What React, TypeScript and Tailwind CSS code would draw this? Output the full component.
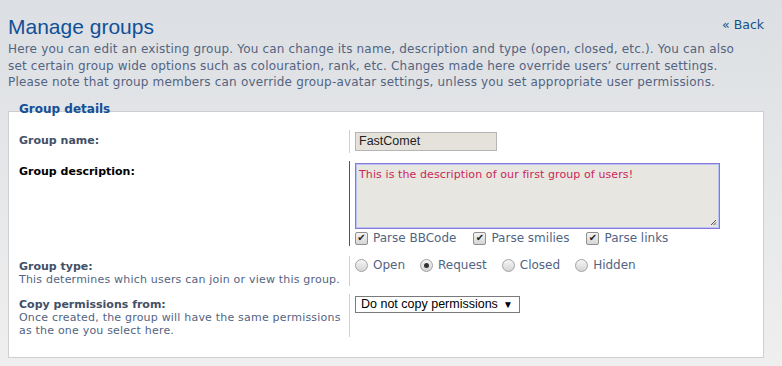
import React from 'react'

const verdana = { fontFamily: '"DejaVu Sans", Verdana, sans-serif' }
const tahoma = { fontFamily: '"Liberation Sans", Tahoma, sans-serif' }

function CheckBox({ label }: { label: string }) {
  return (
    <span className="flex items-center">
      <span className="flex h-[13px] w-[13px] items-center justify-center rounded-[2px] border border-[#8f8f8f] bg-gradient-to-b from-[#f4f4f4] to-[#d6d6d6] text-[10px] leading-none text-[#222]">
        ✔
      </span>
      <span className="ml-[5px] text-[#536482]">{label}</span>
    </span>
  )
}

function Radio({ label, checked }: { label: string; checked?: boolean }) {
  return (
    <span className="flex items-center">
      <span className="flex h-[13px] w-[13px] items-center justify-center rounded-full border border-[#a2a2a2] bg-gradient-to-b from-[#f6f6f6] to-[#d4d4d4]">
        {checked && <span className="h-[5px] w-[5px] rounded-full bg-[#333]" />}
      </span>
      <span className="ml-[5px] text-[#536482]">{label}</span>
    </span>
  )
}

function Row({
  label,
  desc,
  active,
  className = '',
  children,
}: {
  label: string
  desc?: string[]
  active?: boolean
  className?: string
  children: React.ReactNode
}) {
  return (
    <div className={`flex ${className}`}>
      <div className="w-[330px] shrink-0 pt-[4px]">
        <div className={`font-bold ${active ? 'text-black' : 'text-[#425067]'}`}>{label}</div>
        {desc?.map(d => (
          <div key={d} className="tracking-[0.2px] text-[#536482]">{d}</div>
        ))}
      </div>
      <div className={`border-l pl-[5px] ${active ? 'border-[#555]' : 'border-[#d0d0d0]'}`}>
        {children}
      </div>
    </div>
  )
}

export default function App() {
  return (
    <div
      className="min-h-[366px] w-[782px] bg-gradient-to-b from-[#dcdfe3] to-[#efefef] px-[8px] pt-[13px] text-[11px] leading-[13px]"
      style={verdana}
    >
      {/* Header */}
      <div className="flex items-start justify-between pr-[10px]">
        <h1 className="text-[21px] leading-[28px] text-[#115098]" style={tahoma}>
          Manage groups
        </h1>
        <a className="mt-[5px] text-[12.5px] text-[#105289]">« Back</a>
      </div>
      <p className="mt-0 text-[12px] leading-[16.5px] tracking-[0.18px] text-[#536482]">
        Here you can edit an existing group. You can change its name, description and type (open, closed, etc.). You can also
        <br />
        set certain group wide options such as colouration, rank, etc. Changes made here override users’ current settings.
        <br />
        Please note that group members can override group-avatar settings, unless you set appropriate user permissions.
      </p>

      {/* Fieldset */}
      <div className="relative z-10 mt-[11px] pl-[11px] text-[12px] font-bold leading-[14px] text-[#115098]">
        Group details
      </div>
      <div className="-mt-[5px] flex w-[756px] flex-col gap-[8px] border border-[#cfcfcf] bg-white pb-[20px] pl-[10px] pt-[18px]">
        <Row label="Group name:">
          <div className="py-[2px]">
            <div
              className="h-[19px] w-[142px] border border-[#b5b5b5] bg-[#e5e2dc] px-[3px] text-[12.5px] leading-[17px] text-[#222]"
              style={tahoma}
            >
              FastComet
            </div>
          </div>
        </Row>

        <Row label="Group description:" active>
          <div className="pt-[2px]">
            <div className="relative h-[66px] w-[365px] border border-[#8b76d6] bg-[#e8e6e0] px-[3px] py-[4px] tracking-[0.1px] text-[#c8265a] shadow-[inset_0_0_0_1px_#b7c4f5]">
              This is the description of our first group of users!
              <svg className="absolute bottom-[2px] right-[2px]" width="7" height="7" viewBox="0 0 7 7">
                <path d="M6 1 L1 6 M6 3.5 L3.5 6 M6 5.5 L5.5 6" stroke="#555" strokeWidth="1" />
              </svg>
            </div>
            <div className="mt-[2px] flex h-[15px] items-center gap-[17px] text-[12px]">
              <CheckBox label="Parse BBCode" />
              <CheckBox label="Parse smilies" />
              <CheckBox label="Parse links" />
            </div>
          </div>
        </Row>

        <Row label="Group type:" desc={['This determines which users can join or view this group.']} className="mt-[2px]">
          <div className="flex h-[30px] items-start gap-[15px] pt-[3px] text-[12px]">
            <Radio label="Open" />
            <Radio label="Request" checked />
            <Radio label="Closed" />
            <Radio label="Hidden" />
          </div>
        </Row>

        <Row
          label="Copy permissions from:"
          desc={['Once created, the group will have the same permissions', 'as the one you select here.']}
        >
          <div className="h-[43px] pt-[2px]">
            <div
              className="flex h-[17px] w-[165px] items-center justify-between border border-[#7a7a7a] bg-white pl-[5px] pr-[6px] text-[12.5px] text-black"
              style={tahoma}
            >
              <span>Do not copy permissions</span>
              <span className="text-[10px]">▼</span>
            </div>
          </div>
        </Row>
      </div>
    </div>
  )
}
